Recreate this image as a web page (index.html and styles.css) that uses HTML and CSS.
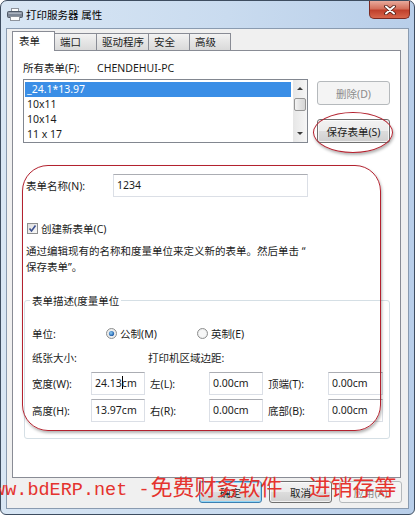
FILE: index.html
```html
<!DOCTYPE html>
<html>
<head>
    <meta charset="utf-8">
    <link rel="stylesheet" href="styles.css">
</head>
<body>
    <div class="win">
        <div class="win-title">
            <div class="win-caption">
                <svg class="win-icon" width="16" height="13" viewBox="0 0 16 13">
                    <rect x="4.5" y="0.5" width="7" height="3.5" fill="#fdfdfd" stroke="#8d939c"/>
                    <rect x="0.5" y="3.5" width="15" height="6" rx="1" fill="#7d8796" stroke="#505a68"/>
                    <rect x="1.5" y="4.5" width="13" height="1.5" fill="#aab2be"/>
                    <rect x="3.5" y="8.5" width="9" height="4" fill="#fdfdfd" stroke="#8d939c"/>
                </svg>
                <span>打印服务器 属性</span>
            </div>
            <div class="win-close">
                <svg width="12" height="10" viewBox="0 0 12 10">
                    <path d="M2 1.5 L10 8.5 M10 1.5 L2 8.5" stroke="#4a1710" stroke-width="3.6" stroke-linecap="round"/>
                    <path d="M2 1.5 L10 8.5 M10 1.5 L2 8.5" stroke="#fff" stroke-width="2" stroke-linecap="round"/>
                </svg>
            </div>
        </div>

        <div class="win-client">
            <div class="tabs">
                <div class="tab tab-on">表单</div>
                <div class="tab">端口</div>
                <div class="tab">驱动程序</div>
                <div class="tab">安全</div>
                <div class="tab">高级</div>
            </div>

            <div class="panel">
                <div class="forms-head">
                    <span class="forms-label">所有表单(F):</span>
                    <span>CHENDEHUI-PC</span>
                </div>

                <div class="forms-area">
                    <div class="listbox">
                        <div class="list-items">
                            <div class="list-item list-item-on">_24.1*13.97</div>
                            <div class="list-item">10x11</div>
                            <div class="list-item">10x14</div>
                            <div class="list-item">11 x 17</div>
                        </div>
                        <div class="scrollbar">
                            <div class="sb-btn"><span class="arrow-up"></span></div>
                            <div class="sb-thumb"></div>
                            <div class="sb-fill"></div>
                            <div class="sb-btn"><span class="arrow-down"></span></div>
                        </div>
                    </div>
                    <div class="side-buttons">
                        <div class="btn btn-off btn-delete">删除(D)</div>
                        <div class="btn btn-save">保存表单(S)</div>
                    </div>
                </div>

                <div class="name-row">
                    <span class="name-label">表单名称(N):</span>
                    <div class="field name-field">1234</div>
                </div>

                <div class="check-row">
                    <svg class="checkbox" width="11" height="11" viewBox="0 0 11 11">
                        <defs>
                            <linearGradient id="cbg" x1="0" y1="0" x2="1" y2="1">
                                <stop offset="0" stop-color="#dcdcdc"/>
                                <stop offset="1" stop-color="#fbfbfb"/>
                            </linearGradient>
                        </defs>
                        <rect x="0.5" y="0.5" width="10" height="10" fill="url(#cbg)" stroke="#8e8f8f"/>
                        <path d="M2.5 5.5 L4.5 8 L8.5 2.5" fill="none" stroke="#3d5190" stroke-width="1.6"/>
                    </svg>
                    <span>创建新表单(C)</span>
                </div>

                <p class="hint">通过编辑现有的名称和度量单位来定义新的表单。然后单击 “<br>保存表单”。</p>

                <div class="group">
                    <div class="group-title">表单描述(度量单位</div>

                    <div class="unit-row">
                        <span class="unit-label">单位:</span>
                        <span class="radio-opt radio-first">
                            <svg width="11" height="11" viewBox="0 0 11 11">
                                <defs>
                                    <radialGradient id="rdot" cx="0.4" cy="0.4" r="0.6">
                                        <stop offset="0" stop-color="#8fd0f6"/>
                                        <stop offset="1" stop-color="#1d5aa8"/>
                                    </radialGradient>
                                </defs>
                                <circle cx="5.5" cy="5.5" r="5" fill="#eceded" stroke="#8e8f8f"/>
                                <circle cx="5.5" cy="5.5" r="2.6" fill="url(#rdot)"/>
                            </svg>
                            <span>公制(M)</span>
                        </span>
                        <span class="radio-opt">
                            <svg width="11" height="11" viewBox="0 0 11 11">
                                <circle cx="5.5" cy="5.5" r="5" fill="#eceded" stroke="#8e8f8f"/>
                                <circle cx="5.5" cy="5.5" r="3.5" fill="#f7f7f7"/>
                            </svg>
                            <span>英制(E)</span>
                        </span>
                    </div>

                    <div class="paper-row">
                        <span class="paper-label">纸张大小:</span>
                        <span>打印机区域边距:</span>
                    </div>

                    <div class="size-grid">
                        <span>宽度(W):</span>
                        <div class="field">24.13<span class="caret"></span>cm</div>
                        <span class="pad-label">左(L):</span>
                        <div class="field">0.00cm</div>
                        <span class="pad-label">顶端(T):</span>
                        <div class="field">0.00cm</div>

                        <span>高度(H):</span>
                        <div class="field">13.97cm</div>
                        <span class="pad-label">右(R):</span>
                        <div class="field">0.00cm</div>
                        <span class="pad-label">底部(B):</span>
                        <div class="field">0.00cm</div>
                    </div>
                </div>
            </div>

            <div class="footer">
                <div class="btn btn-default">确定</div>
                <div class="btn">取消</div>
                <div class="btn btn-off">应用(A)</div>
            </div>
        </div>

        <!-- hand-drawn annotations on the screenshot -->
        <div class="mark-box"></div>
        <div class="mark-oval"></div>

        <div class="watermark"><span class="wm-latin">www.bdERP.net -</span><span class="wm-cjk">免费财务软件</span><span class="wm-cjk wm-tail">进销存等</span></div>
    </div>
</body>
</html>
```

FILE: styles.css
```css
* {
    box-sizing: border-box;
}

html, body {
    margin: 0;
    padding: 0;
}

body {
    width: 415px;
    height: 515px;
    overflow: hidden;
    background: #fff;
    font-family: "Noto Sans", "Noto Sans CJK SC", sans-serif;
    font-size: 10.5px;
    color: #1c1c1c;
}

.win {
    position: relative;
    width: 415px;
    height: 515px;
    border: 1px solid #3e4d60;
    border-radius: 7px 7px 6px 6px;
    background: linear-gradient(to right, #d8e6f4, #c9dbef 55%, #b8cee9);
    display: flex;
    flex-direction: column;
}

.win-title {
    height: 27px;
    display: flex;
    justify-content: space-between;
    align-items: flex-start;
}

.win-caption {
    height: 27px;
    padding-left: 6px;
    display: flex;
    align-items: center;
    gap: 3px;
    color: #000;
}

.win-close {
    width: 41px;
    height: 18px;
    margin-right: 4px;
    border: 1px solid #7b2a22;
    border-top: none;
    border-radius: 0 0 5px 5px;
    background: linear-gradient(#e9aa9c, #d4705c 45%, #c0402c 55%, #d8664c);
    display: flex;
    align-items: center;
    justify-content: center;
}

.win-client {
    flex: 1;
    margin: 0 5px 5px;
    padding: 2px 6px 0 5px;
    border: 1px solid #8a9bb0;
    background: #f0f0f0;
}

/* tabs */

.tabs {
    height: 19px;
    display: flex;
    align-items: flex-end;
}

.tab {
    height: 17px;
    min-width: 42px;
    margin-left: -1px;
    padding: 0 4px 0 5px;
    line-height: 16px;
    border: 1px solid #898c95;
    border-bottom: none;
    background: linear-gradient(#f3f3f3, #e5e5e5 50%, #d9d9d9);
}

.tab-on {
    position: relative;
    z-index: 1;
    height: 20px;
    min-width: 43px;
    margin: 0 0 -1px 0;
    padding-left: 6px;
    line-height: 18px;
    background: #fff;
}

.tab-on + .tab {
    margin-left: 0;
    border-left: none;
}

.panel {
    width: 389px;
    height: 428px;
    padding: 10px 0 0 10px;
    border: 1px solid #898c95;
    background: #fff;
}

.forms-head {
    height: 14px;
    line-height: 14px;
    display: flex;
}

.forms-label {
    width: 74px;
}

.forms-area {
    margin-top: 4px;
    display: flex;
    align-items: flex-start;
}

.listbox {
    width: 285px;
    height: 64px;
    border: 1px solid #828790;
    display: flex;
}

.list-items {
    flex: 1;
    padding-top: 2px;
}

.list-item {
    height: 15px;
    line-height: 15px;
    margin: 0 2px 0 1px;
    padding-left: 2px;
}

.list-item-on {
    background: #3a8ee6;
    color: #fff;
}

.scrollbar {
    width: 14px;
    display: flex;
    flex-direction: column;
    background: linear-gradient(to right, #e6e6e6, #f6f6f6);
}

.sb-btn {
    height: 17px;
    display: flex;
    align-items: center;
    justify-content: center;
}

.arrow-up {
    border-left: 3px solid transparent;
    border-right: 3px solid transparent;
    border-bottom: 3px solid #3a3a3a;
}

.arrow-down {
    border-left: 3px solid transparent;
    border-right: 3px solid transparent;
    border-top: 3px solid #3a3a3a;
}

.sb-thumb {
    height: 13px;
    margin: 1px 1px 0;
    border: 1px solid #959595;
    border-radius: 2px;
    background: linear-gradient(to right, #f3f3f3, #e2e2e2 50%, #d6d6d6);
}

.sb-fill {
    flex: 1;
}

.side-buttons {
    width: 73px;
    margin-left: 9px;
    display: flex;
    flex-direction: column;
}

.btn {
    height: 22px;
    border: 1px solid #707070;
    border-radius: 3px;
    background: linear-gradient(#f2f2f2, #ebebeb 50%, #dddddd 50%, #cfcfcf);
    box-shadow: inset 0 0 0 1px rgba(255, 255, 255, 0.7);
    display: flex;
    align-items: center;
    justify-content: center;
}

.btn-off {
    border-color: #b5b9bc;
    background: #f4f4f4;
    box-shadow: none;
    color: #8b8b8b;
}

.btn-delete {
    height: 24px;
    margin-top: 2px;
}

.btn-save {
    height: 24px;
    margin-top: 14px;
}

.btn-default {
    border-color: #3c7fb1;
    box-shadow: inset 0 0 0 1px #8fd6f7;
}

.footer {
    margin-top: 3px;
    display: flex;
    justify-content: flex-end;
    gap: 7px;
}

.footer .btn {
    width: 63px;
}

/* lower part */

.field {
    height: 23px;
    padding-left: 3px;
    line-height: 21px;
    border: 1px solid #dbdfe6;
    border-top-color: #abadb3;
    background: #fff;
    white-space: nowrap;
}

.caret {
    display: inline-block;
    width: 1px;
    height: 13px;
    margin-right: -1px;
    vertical-align: -2px;
    background: #000;
}

.name-row {
    margin-top: 31px;
    padding-left: 3px;
    display: flex;
    align-items: center;
}

.name-label {
    width: 87px;
}

.name-field {
    width: 195px;
}

.check-row {
    height: 14px;
    margin-top: 24px;
    padding-left: 4px;
    display: flex;
    align-items: center;
    gap: 3px;
}

.hint {
    margin: 8px 0 0;
    padding-left: 3px;
    line-height: 16px;
}

.group {
    width: 366px;
    height: 139px;
    margin: 25px 0 0 1px;
    padding: 0 0 0 7px;
    border: 1px solid #d5dfe5;
    border-radius: 3px;
}

.group-title {
    width: fit-content;
    margin: -7px 0 0 -2px;
    padding: 0 2px;
    line-height: 14px;
    background: #fff;
}

.unit-row {
    height: 16px;
    margin-top: 17px;
    display: flex;
    align-items: center;
}

.unit-label {
    width: 74px;
}

.radio-opt {
    display: flex;
    align-items: center;
    gap: 3px;
}

.radio-first {
    width: 91px;
}

.paper-row {
    height: 16px;
    margin-top: 9px;
    line-height: 16px;
    display: flex;
}

.paper-label {
    width: 116px;
}

.size-grid {
    margin-top: 6px;
    display: grid;
    grid-template-columns: 59px 54px 64px 54px 65px 55px;
    grid-auto-rows: 23px;
    row-gap: 4px;
    align-items: center;
}

.pad-label {
    padding-left: 5px;
}

/* annotations drawn over the screenshot */

.mark-box {
    position: absolute;
    left: 21px;
    top: 164px;
    width: 359px;
    height: 266px;
    border: 1.5px solid #b3222f;
    border-radius: 26px;
    box-shadow: 1px 2px 3px rgba(0, 0, 0, 0.3);
}

.mark-oval {
    position: absolute;
    left: 312px;
    top: 111px;
    width: 80px;
    height: 41px;
    border: 1.5px solid #b3222f;
    border-radius: 50%;
    box-shadow: 1px 2px 3px rgba(0, 0, 0, 0.3);
}

.watermark {
    position: absolute;
    left: -18px;
    top: 471px;
    height: 26px;
    line-height: 26px;
    white-space: nowrap;
    color: #e5332e;
}

.wm-latin {
    font-family: "Liberation Mono", monospace;
    font-size: 18.5px;
}

.wm-cjk {
    margin-left: 1px;
    font-family: "Noto Sans CJK SC", sans-serif;
    font-size: 22px;
}

.wm-tail {
    margin-left: 26px;
}
```
